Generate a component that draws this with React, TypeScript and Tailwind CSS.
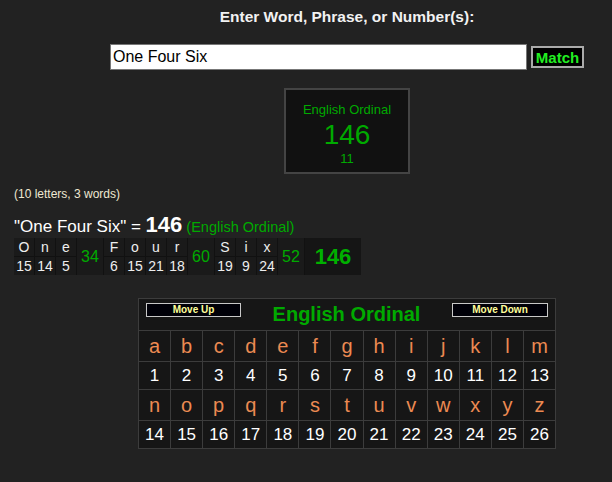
const words = [
  { letters: [["O", 15], ["n", 14], ["e", 5]], sum: 34 },
  { letters: [["F", 6], ["o", 15], ["u", 21], ["r", 18]], sum: 60 },
  { letters: [["S", 19], ["i", 9], ["x", 24]], sum: 52 },
] as const;

const alphabet = "abcdefghijklmnopqrstuvwxyz".split("");

function LetterRow({ from }: { from: number }) {
  const slice = alphabet.slice(from, from + 13);
  return (
    <>
      <div className="grid grid-cols-13 gap-px">
        {slice.map((ch) => (
          <div
            key={ch}
            className="h-[30px] bg-[#161616] flex items-center justify-center text-[20px] text-[#ec8a52]"
          >
            {ch}
          </div>
        ))}
      </div>
      <div className="grid grid-cols-13 gap-px">
        {slice.map((ch, i) => (
          <div
            key={ch}
            className="h-[27px] bg-[#161616] flex items-center justify-center text-[17px] text-white"
          >
            {from + i + 1}
          </div>
        ))}
      </div>
    </>
  );
}

export default function App() {
  return (
    <div className="w-[612px] h-[482px] bg-[#222222] font-['Liberation_Sans',Arial,sans-serif] overflow-hidden">
      {/* Search area */}
      <div className="pl-[82px] flex flex-col items-center">
        <h1 className="pt-[8px] text-[15.5px] leading-[18px] font-bold text-[#f2f2f2]">
          Enter Word, Phrase, or Number(s):
        </h1>
        <div className="mt-[18px] flex items-center">
          <input
            readOnly
            value="One Four Six"
            className="w-[417px] h-[26px] bg-white border border-[#777] px-[2px] text-[16px] text-black outline-none"
          />
          <button className="ml-[4px] w-[53px] h-[22px] bg-black border-2 border-[#aaa] text-[15px] leading-none font-bold text-[#22ee22]">
            Match
          </button>
        </div>
        <div className="mt-[18px] w-[126px] h-[86px] bg-[#111] border-2 border-[#444] flex flex-col items-center pt-[12px] text-[#00aa00]">
          <div className="text-[13px] leading-[15px]">English Ordinal</div>
          <div className="text-[28px] leading-[30px] mt-[3px]">146</div>
          <div className="text-[13px] leading-[15px] mt-[1px]">11</div>
        </div>
      </div>

      {/* Breakdown */}
      <div className="pl-[14px]">
        <div className="mt-[13px] text-[12px] leading-[14px] text-[#eee8d2]">
          (10 letters, 3 words)
        </div>
        <div className="mt-[7px] h-[24px] flex items-baseline text-white">
          <span className="text-[17px]">"One Four Six" =&nbsp;</span>
          <span className="text-[22px] font-bold">146</span>
          <span className="text-[14.5px] text-[#00aa00]">&nbsp;(English Ordinal)</span>
        </div>
        <div className="mt-[6px] inline-flex gap-px bg-[#111]">
          {words.map((w, wi) => (
            <div key={wi} className="flex gap-px">
              {w.letters.map(([ch, n], li) => (
                <div key={li} className="w-[20px] flex flex-col gap-px">
                  <div className="h-[18px] bg-[#1a1a1a] flex items-center justify-center text-[14px] text-[#eee]">
                    {ch}
                  </div>
                  <div className="h-[18px] bg-[#1a1a1a] flex items-center justify-center text-[14px] text-[#eee]">
                    {n}
                  </div>
                </div>
              ))}
              <div className="w-[26px] bg-[#1a1a1a] flex items-center justify-center text-[16px] text-[#00aa00]">
                {w.sum}
              </div>
            </div>
          ))}
          <div className="w-[56px] bg-[#151515] flex items-center justify-center text-[22px] font-bold text-[#00b000]">
            146
          </div>
        </div>
      </div>

      {/* Cipher chart */}
      <div className="pl-[82px] mt-[23px] flex justify-center">
        <div className="w-[418px] bg-[#3c3c3c] p-px flex flex-col gap-px">
          <div className="h-[31px] bg-[#161616] flex items-start justify-between px-[7px]">
            <button className="mt-[4px] w-[95px] h-[14px] bg-[#000008] border border-[#c8c8c8] text-[10px] leading-none font-bold text-[#ffff99]">
              Move Up
            </button>
            <div className="mt-[3px] text-[20px] leading-[24px] font-bold text-[#00aa00]">
              English Ordinal
            </div>
            <button className="mt-[4px] w-[96px] h-[14px] bg-[#000008] border border-[#c8c8c8] text-[10px] leading-none font-bold text-[#ffff99]">
              Move Down
            </button>
          </div>
          <LetterRow from={0} />
          <LetterRow from={13} />
        </div>
      </div>
    </div>
  );
}
